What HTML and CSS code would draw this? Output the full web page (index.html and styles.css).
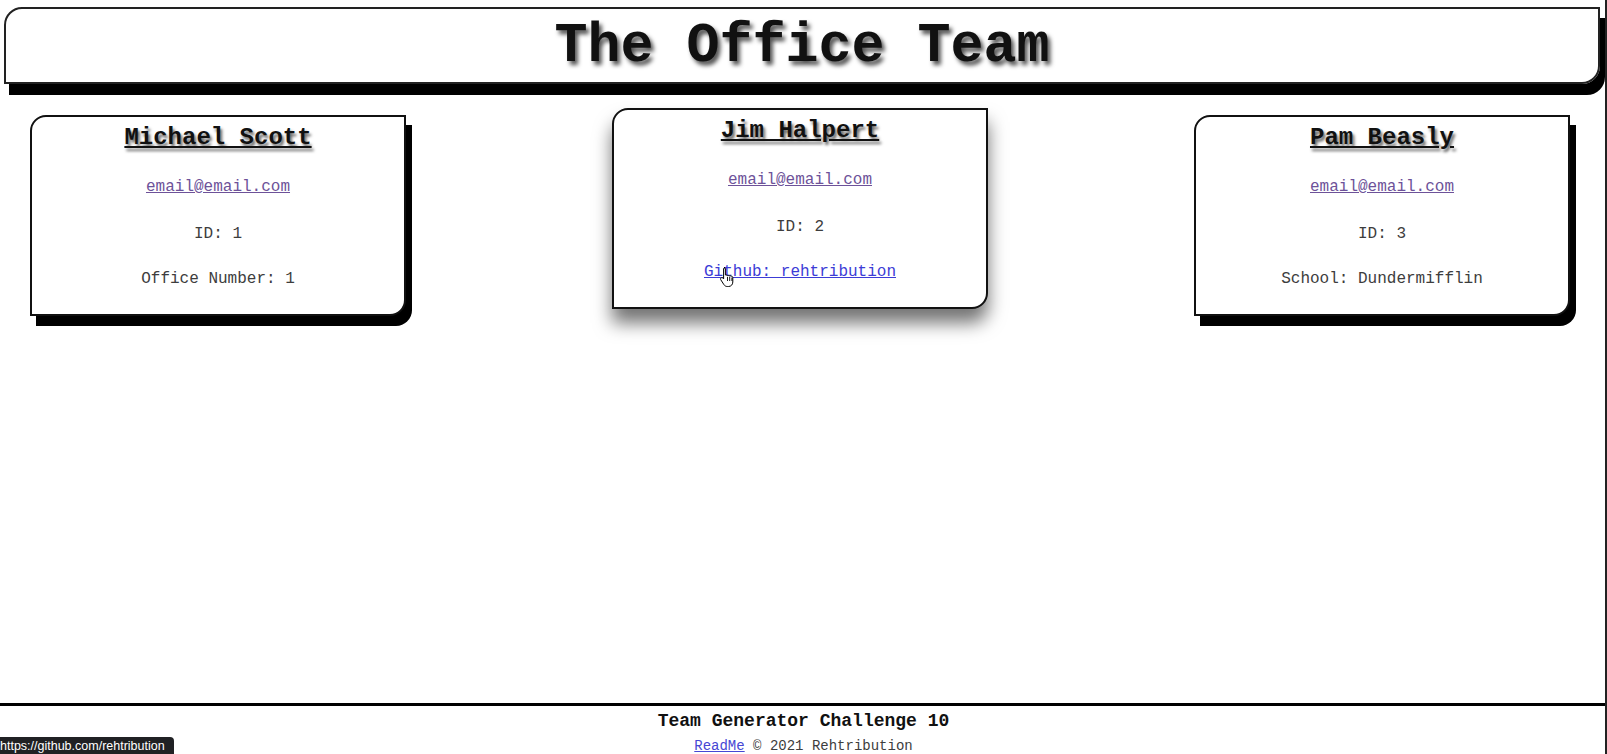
FILE: index.html
```html
<!DOCTYPE html>
<html lang="en">
<head>
<meta charset="utf-8">
<title>The Office Team</title>
<link rel="stylesheet" href="styles.css">
</head>
<body>
<div class="page">
  <header class="top">
    <h1 class="title">The Office Team</h1>
  </header>
  <main class="team">
    <section class="card">
      <h2 class="name">Michael Scott</h2>
      <p class="line email">  <a class="mail" href="#">email@email.com</a></p>
      <p class="line id">ID: 1</p>
      <p class="line">Office Number: 1</p>
    </section>
    <section class="card card-hover">
      <h2 class="name">Jim Halpert</h2>
      <p class="line email"><a class="mail" href="#">email@email.com</a></p>
      <p class="line id">ID: 2</p>
      <p class="line"><a class="gh" href="#">Github: rehtribution</a></p>
      <svg class="cursor" width="16" height="22" viewBox="0 0 16 22" aria-hidden="true">
        <path d="M5 1.5c.8 0 1.4.6 1.4 1.4V9l.6-.1c.8-.1 1.3.3 1.5.9.5-.4 1.3-.4 1.8.1.5-.3 1.3-.2 1.7.3.9-.2 1.8.4 1.8 1.4v4.4c0 2.6-1.8 4.5-4.3 4.5H8.3c-1.5 0-2.6-.7-3.4-1.9L1.8 13.8c-.5-.7-.3-1.600.4-2 .6-.4 1.4-.2 1.8.3l.6.8V2.9c0-.8.6-1.4 1.4-1.4z" fill="#fff" stroke="#000" stroke-width="1"/>
        <path d="M8.5 11v4M10.7 11v4M12.9 11.5v3.5" stroke="#000" stroke-width="0.9" fill="none"/>
      </svg>
    </section>
    <section class="card">
      <h2 class="name">Pam Beasly</h2>
      <p class="line email"><a class="mail" href="#">email@email.com</a></p>
      <p class="line id">ID: 3</p>
      <p class="line">School: Dundermifflin</p>
    </section>
  </main>
  <footer class="foot">
    <p class="foot-title">Team Generator Challenge 10</p>
    <p class="foot-sub"><a class="readme" href="#">ReadMe</a> &copy; 2021 Rehtribution</p>
  </footer>
</div>
<div class="status">https://github.com/rehtribution</div>
<div class="edge"></div>
</body>
</html>
```

FILE: styles.css
```css
html, body {
  margin: 0;
  padding: 0;
  background: #fff;
}

body {
  font-family: "Liberation Mono", "Courier New", monospace;
  color: #333;
}

.page {
  min-height: 754px;
  display: flex;
  flex-direction: column;
}

.top {
  box-sizing: border-box;
  height: 77px;
  margin: 7px 7px 0 4px;
  border: 2px solid #222;
  border-radius: 18px 0 18px 0;
  box-shadow: 5px 11px 0 #000;
  display: flex;
  justify-content: center;
  align-items: center;
}

.title {
  margin: 2px 0 0;
  font-size: 55px;
  font-weight: bold;
  line-height: 64px;
  color: #111;
  text-shadow: 3px 4px 4px #555;
}

.team {
  display: flex;
  justify-content: space-between;
  align-items: flex-start;
  padding: 0 37px 0 30px;
  margin-top: 31px;
}

.card {
  position: relative;
  box-sizing: border-box;
  width: 376px;
  height: 201px;
  border: 2px solid #111;
  border-radius: 16px 0 16px 0;
  box-shadow: 6px 10px 0 #000;
  padding: 7px 0 0;
  text-align: center;
  background: #fff;
}

.card-hover {
  transform: translateY(-7px);
  box-shadow: 0 14px 18px rgba(0, 0, 0, 0.55);
}

.name {
  margin: 0;
  font-size: 24px;
  line-height: 28px;
  font-weight: bold;
  color: #111;
  text-decoration: underline;
  text-shadow: 2px 3px 3px #666;
}

.line {
  margin: 27px 0 0;
  font-size: 16px;
  line-height: 18px;
  color: #3d3d3d;
}

.line.email {
  margin-top: 26px;
}

.line.id {
  margin-top: 29px;
}

.mail {
  color: #6d5299;
}

.gh {
  color: #3c3cd6;
}

.cursor {
  position: absolute;
  left: 105px;
  top: 156px;
}

.foot {
  margin-top: auto;
  border-top: 3px solid #000;
  text-align: center;
  padding: 4px 0 0;
}

.foot-title {
  margin: 0;
  font-size: 18px;
  line-height: 22px;
  font-weight: bold;
  color: #111;
}

.foot-sub {
  margin: 6px 0 0;
  font-size: 14px;
  line-height: 16px;
  color: #3d3d3d;
}

.readme {
  color: #4646d4;
}

.status {
  position: fixed;
  left: 0;
  bottom: 0;
  height: 17px;
  padding: 0 9px 0 0;
  background: #202124;
  color: #fff;
  border-top-right-radius: 4px;
  font-family: "Liberation Sans", Arial, sans-serif;
  font-size: 12.5px;
  line-height: 18px;
  white-space: nowrap;
  overflow: hidden;
}

.edge {
  position: fixed;
  top: 0;
  right: 0;
  width: 2px;
  height: 100%;
  background: #222;
}
```
